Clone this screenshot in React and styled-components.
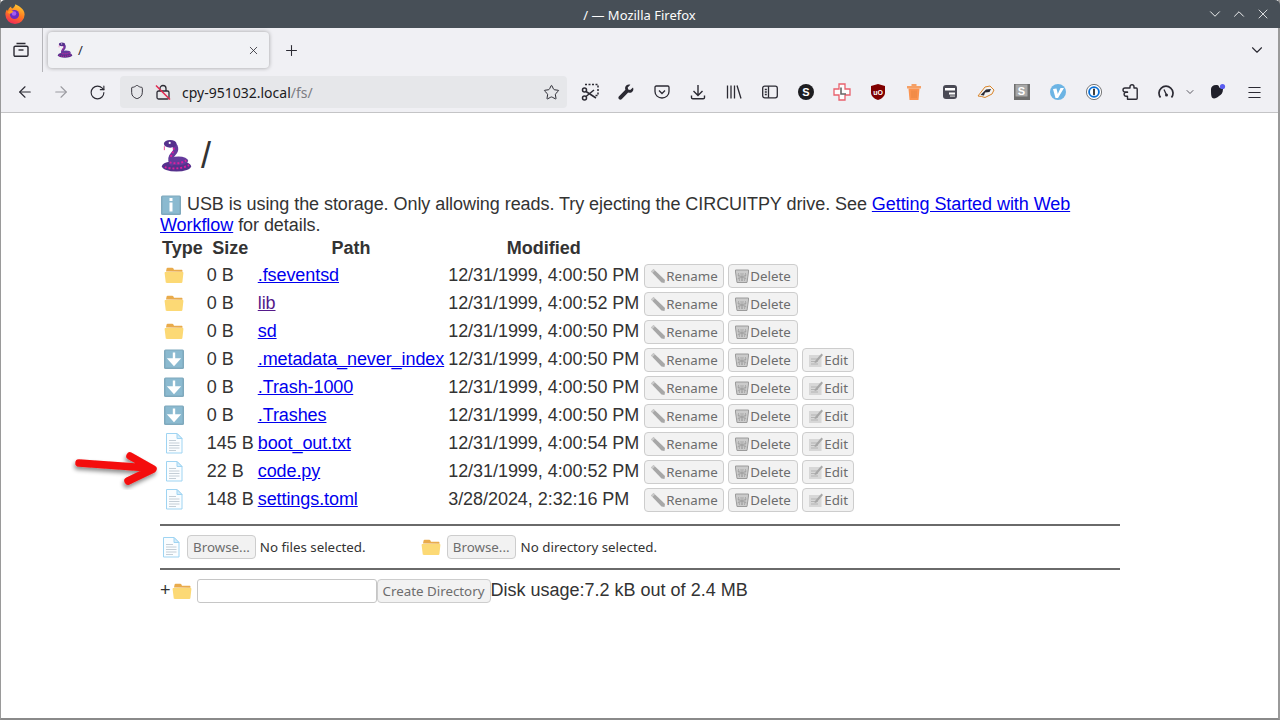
import React from 'react';
import styled, { createGlobalStyle } from 'styled-components';
import { ArrowLeft, ArrowRight, RotateCw, Shield, Star, Plus, X, ChevronDown, ChevronUp, Menu } from 'lucide-react';

const GlobalStyle = createGlobalStyle`
  html, body { margin: 0; padding: 0; background: #fff; overflow: hidden; }
  #root { width: 1280px; height: 720px; }
  * { box-sizing: border-box; }
`;

const Frame = styled.div`
  width: 1280px;
  height: 720px;
  display: flex;
  flex-direction: column;
  border-right: 2px solid #9a9a9a;
  border-bottom: 2px solid #8a8a8a;
  border-left: 1px solid #9a9a9a;
  background: #fff;
  position: relative;
`;

const TitleBar = styled.div`
  height: 28px;
  margin-left: -1px;
  margin-right: -2px;
  padding: 0 8px 0 4px;
  flex: none;
  display: flex;
  align-items: center;
  justify-content: space-between;
  background: #474f57;
  border-radius: 5px 5px 0 0;
`;

const TitleText = styled.div`
  font: 13px "Noto Sans", sans-serif;
  color: #fcfcfc;
  position: absolute;
  left: 0;
  right: 0;
  top: 6px;
  text-align: center;
`;

const WindowControls = styled.div`
  display: flex;
  gap: 6px;
  color: #fff;
`;

const WindowButton = styled.span`
  width: 18px;
  height: 18px;
  display: flex;
  align-items: center;
  justify-content: center;
`;

const TabStrip = styled.div`
  height: 44px;
  flex: none;
  display: flex;
  align-items: center;
  background: #f0f0f4;
  color: #2b2a33;
`;

const TabSlot = styled.div`
  width: 42px;
  height: 44px;
  flex: none;
  display: flex;
  align-items: center;
  justify-content: center;
  padding-right: 2px;
  border-right: 1px solid #b5b5b9;
  margin-right: 5px;
`;

const Tab = styled.div`
  width: 221px;
  height: 36px;
  flex: none;
  display: flex;
  align-items: center;
  padding: 0 9px;
  background: #f1f2f5;
  border-radius: 4px;
  box-shadow: 0 0 4px rgba(0, 0, 0, 0.35);
  font: 13px "Noto Sans", sans-serif;
`;

const TabTitle = styled.span`
  flex: 1;
  margin-left: 5px;
`;

const NewTab = styled.div`
  width: 44px;
  display: flex;
  justify-content: center;
`;

const TabListButton = styled.div`
  margin-left: auto;
  margin-right: 12px;
  display: flex;
`;

const NavBar = styled.div`
  height: 41px;
  flex: none;
  display: flex;
  align-items: center;
  padding-left: 6px;
  background: #f0f0f4;
  border-bottom: 1px solid #c4c4c6;
  color: #2b2a33;
`;

const ToolButton = styled.div`
  width: ${p => p.$width || 36}px;
  height: 32px;
  flex: none;
  display: flex;
  align-items: center;
  justify-content: center;
  color: ${p => p.$dim ? '#9a9aa0' : 'inherit'};
`;

const UrlBar = styled.div`
  width: 447px;
  height: 32px;
  margin: 0 5px;
  padding: 0 7px 0 9px;
  flex: none;
  display: flex;
  align-items: center;
  gap: 10px;
  border-radius: 4px;
  background: #e6e7ea;
`;

const UrlText = styled.span`
  flex: 1;
  margin-left: 1px;
  font: 14px "Noto Sans", sans-serif;
  color: #1c1b22;
`;

const UrlPath = styled.span`
  color: #7c7c82;
`;

const Content = styled.main`
  width: 960px;
  margin-left: 159px;
  flex: 1;
  font: 18px/21px "Liberation Sans", Arial, sans-serif;
  color: #333;
`;

const Heading = styled.h1`
  height: 41px;
  margin: 22px 0 18px;
  display: flex;
  align-items: center;
  gap: 8px;
  font: 36px/41px "Liberation Sans", Arial, sans-serif;
  color: #333;
`;

const Notice = styled.p`
  margin: 0;
  letter-spacing: -0.06px;
`;

const Link = styled.a`
  color: ${p => p.$visited ? '#551a8b' : '#0000ee'};
  text-decoration: underline;
`;

const FileTable = styled.table`
  margin: -1px 0 0 -1px;
  border-spacing: 2px;
  white-space: nowrap;
`;

const HeadCell = styled.th`
  padding: 1px;
  font-weight: bold;
  text-align: center;
`;

const Cell = styled.td`
  padding: 1px;
  height: 26px;
`;

const TypeCell = styled(Cell)`
  padding: 0 1px 2px 2px;
`;

const NameCell = styled(Cell)`
  letter-spacing: -0.08px;
`;

const DateCell = styled(Cell)`
  letter-spacing: -0.05px;
`;

const ActionCell = styled(Cell)`
  padding: 2px 1px 0 2px;
  font-size: 0;
`;

const EmojiBox = styled.span`
  display: inline-flex;
  vertical-align: middle;
  flex: none;
  width: 22px;
  height: 22px;
  margin: -2px 0;
`;

const DisabledButton = styled.button`
  height: 24px;
  padding: 0 5px;
  margin-right: 4px;
  display: inline-flex;
  align-items: center;
  vertical-align: middle;
  border: 1px solid #cdcdcd;
  border-radius: 4px;
  background: #f2f2f2;
  font: 13.33px "Noto Sans", sans-serif;
  color: #6d6d6d;
  white-space: nowrap;
`;

const ActionButton = styled(DisabledButton)`
  width: ${p => p.$width}px;
`;

const CreateButton = styled(DisabledButton)`
  width: 114px;
  margin-right: 0;
  justify-content: center;
`;

const Glyph = styled.span`
  display: inline-flex;
  flex: none;
  opacity: 0.7;
  filter: grayscale(1);
`;

const Rule = styled.hr`
  height: 2px;
  margin: ${p => p.$top || 0}px 0 0;
  border: 0;
  background: #6a6a6a;
`;

const UploadRow = styled.div`
  height: 42px;
  display: flex;
  align-items: center;
  font: 13.33px "Noto Sans", sans-serif;
  color: #333;
`;

const UploadIcon = styled.span`
  display: inline-flex;
  margin-right: 5px;
`;

const NoSelection = styled.span`
  margin-left: ${p => p.$left || 0}px;
  width: ${p => p.$width}px;
`;

const CreateRow = styled.div`
  height: 42px;
  display: flex;
  align-items: center;
`;

const RowText = styled.span`
  margin-bottom: 2px;
`;

const NameInput = styled.input`
  width: 180px;
  height: 24px;
  margin-left: 4px;
  border: 1px solid #c6c6c6;
  border-radius: 3px;
  background: #fff;
`;

const BadgeText = styled.text`
  font: bold ${p => p.$size}px "Liberation Sans", Arial, sans-serif;
  fill: ${p => p.$fill};
`;

const ArrowOverlay = styled.svg`
  position: absolute;
  left: 70px;
  top: 448px;
  width: 95px;
  height: 42px;
  pointer-events: none;
`;

const FirefoxLogo = () => (
  <svg width="22" height="22" viewBox="0 0 22 22">
    <defs>
      <linearGradient id="fx" x1="0.7" y1="0" x2="0.3" y2="1">
        <stop offset="0" stopColor="#ffcc33" />
        <stop offset="0.5" stopColor="#ff7a1f" />
        <stop offset="1" stopColor="#f0245c" />
      </linearGradient>
    </defs>
    <path d="M11 21a9.6 9.6 0 0 1-9.6-9.6c0-2 .6-3.6 1.6-5 .2.8.6 1.2 1 1.4.2-2.2 1.6-3.6 3.2-4.4-.2 1 .2 1.6 1.2 2 1.4-1 2.6-2 3-4.2 3.4 1.6 9.2 4.8 9.2 10.2A9.6 9.6 0 0 1 11 21z" fill="url(#fx)" />
    <circle cx="10.5" cy="11.5" r="4.6" fill="#6a2bc4" />
    <circle cx="10" cy="10.5" r="2.3" fill="#a65bf0" />
    <path d="M3.5 9c1.5 3 4 1.5 6-.5-2-1-3.500-1-6 .5z" fill="#ff9c24" />
  </svg>
);

const Blinka = ({ size = 32 }) => (
  <svg width={size} height={size} viewBox="0 0 32 34">
    <ellipse cx="16" cy="28" rx="15" ry="5.500" fill="#55308c" />
    <ellipse cx="18" cy="22.500" rx="10" ry="4.500" fill="#643a9c" />
    <path d="M10 5C17 6 16 12 13 15C10 18 9 21 11 25" fill="none" stroke="#643a9c" strokeWidth="5" strokeLinecap="round" />
    <ellipse cx="9.500" cy="5" rx="6.500" ry="4" fill="#55308c" />
    <path d="M13 9C14 12 11 15 10 19M4 29C10 31 21 31 29 27M9 24C14 26 22 25 26 22" fill="none" stroke="#dc1f9c" strokeWidth="2" strokeDasharray="2 2" />
    <circle cx="9" cy="4" r="1.100" fill="#fff" />
    <path d="M3.500 7.500v4" stroke="#e94a9a" strokeWidth="1" />
  </svg>
);

const FolderIcon = () => (
  <EmojiBox>
    <svg viewBox="0 0 22 22" width="100%" height="100%">
      <path d="M3 7.500l.6-3c.1-.5.5-.8 1-.8h4.700c.5 0 .8.2 1 .6l.7 1.500h7.500c.7 0 1 .5 1 1v1z" fill="#e9ab4b" />
      <path d="M2.500 8h17c.6 0 1 .5 .9 1.100l-1 9c-.1.6-.5.9-1 .9H3.700c-.5 0-1-.3-1-.9l-1.100-9C1.500 8.500 2 8 2.500 8z" fill="#fcd975" />
    </svg>
  </EmojiBox>
);

const FileIcon = () => (
  <EmojiBox>
    <svg viewBox="0 0 22 22" width="100%" height="100%">
      <path d="M3.500 1.500h10.500l5 5v14.500H3.500z" fill="#fafdff" stroke="#9fd4f2" strokeWidth="1" />
      <path d="M14 1.500v5h5z" fill="#d5ecfa" stroke="#9fd4f2" strokeWidth="1" />
      <path d="M6 8.500h7M6 11h10.500M6 13.500h10.500M6 16h10.500M6 18.500h7" stroke="#c4ced6" strokeWidth="1" />
    </svg>
  </EmojiBox>
);

const DownIcon = () => (
  <EmojiBox>
    <svg viewBox="0 0 22 22" width="100%" height="100%">
      <rect x="1" y="1.500" width="20" height="19.500" rx="1.500" fill="#7fa9bd" />
      <rect x="2.500" y="2.500" width="17" height="17" fill="#8bbad0" />
      <path d="M11 4.500v11M6.500 11.500l4.500 5 4.500-5z" stroke="#fff" strokeWidth="2.400" fill="#fff" />
    </svg>
  </EmojiBox>
);

const InfoIcon = () => (
  <EmojiBox>
    <svg viewBox="0 0 22 22" width="100%" height="100%">
      <rect x="1" y="1.500" width="20" height="19.500" rx="1.500" fill="#7fa9bd" />
      <rect x="2.500" y="2.500" width="17" height="17" fill="#8bbad0" />
      <rect x="9.500" y="4" width="3" height="3" fill="#fff" />
      <rect x="9.500" y="8.500" width="3" height="9" fill="#fff" />
    </svg>
  </EmojiBox>
);

const PencilGlyph = () => (
  <Glyph>
    <svg width="16" height="16" viewBox="0 0 16 16">
      <path d="M1 3.500L3.500 1l11.500 11-.5 3-3-.5z" fill="#888" />
      <path d="M1 3.500L3.500 1l1.500 1.500L2.500 5z" fill="#bbb" />
    </svg>
  </Glyph>
);

const TrashGlyph = () => (
  <Glyph>
    <svg width="16" height="16" viewBox="0 0 16 16">
      <path d="M1.500 2h13v2L13 14.500H3L1.500 4z" fill="#bbb" stroke="#777" strokeWidth="1" />
      <path d="M4.500 5l1 8M7 5l.5 8M9 5l-.5 8M11.500 5l-1 8M3.500 7l9 4M12.500 7l-9 4" stroke="#777" strokeWidth="0.700" />
    </svg>
  </Glyph>
);

const MemoGlyph = () => (
  <Glyph>
    <svg width="16" height="16" viewBox="0 0 16 16">
      <rect x="1" y="3" width="12.500" height="12" fill="#ccc" />
      <path d="M3 7h7M3 9.500h7M3 12h7" stroke="#999" strokeWidth="1" />
      <path d="M7 9l6.500-7.500 1.500 1.500-6.500 7.500-2 .5z" fill="#888" />
    </svg>
  </Glyph>
);

const ViewIcon = () => (
  <svg width="16" height="16" viewBox="0 0 16 16" fill="none" stroke="currentColor" strokeWidth="1.400">
    <path d="M3.500 1.500h9M1 5.500c0-.8.5-1.300 1.300-1.300h11.400c.8 0 1.300.5 1.300 1.300v7.500c0 .8-.5 1.300-1.300 1.300H2.300C1.500 14.300 1 13.800 1 13z" />
    <path d="M5.500 8h5" />
  </svg>
);

const LockOff = () => (
  <svg width="16" height="16" viewBox="0 0 16 16" fill="none" stroke="#2b2a33" strokeWidth="1.300">
    <rect x="2" y="7" width="12" height="8" rx="1.500" />
    <path d="M5 7V4.500a3 3 0 0 1 6 0V7" />
    <path d="M1 1.500l14 14" stroke="#e22850" strokeWidth="1.500" />
  </svg>
);

const ScreenshotIcon = () => (
  <svg width="18" height="18" viewBox="0 0 18 18" fill="none" stroke="#2b2a33" strokeWidth="1.500">
    <path d="M4 1.500h13v11h-3" strokeDasharray="2 1.500" />
    <circle cx="3.500" cy="7" r="2" />
    <circle cx="3.500" cy="15" r="2" />
    <path d="M5 8.500l10 6.500M5 13.500l8-6.500" />
  </svg>
);

const WrenchIcon = () => (
  <svg width="16" height="16" viewBox="0 0 16 16" fill="#2b2a33">
    <path d="M15 3.500l-2.800 2.500-2-.5-.5-2L12.400.8C10.500 0 8.300.8 7.500 2.500c-.5 1-.5 2.200-.1 3.200L.8 12.500c-.8.800-.3 2.200.3 2.700.6.500 1.800.7 2.500 0l6.600-6.700c1 .4 2.200.4 3.200-.1 1.800-.9 2.500-3 1.600-4.900z" />
  </svg>
);

const PocketIcon = () => (
  <svg width="16" height="16" viewBox="0 0 16 16" fill="none" stroke="#2b2a33" strokeWidth="1.300">
    <path d="M2.200 2h11.600c.7 0 1.200.5 1.200 1.200v4.300c0 3.700-3.100 6.500-7 6.500s-7-2.800-7-6.500V3.200C1 2.500 1.500 2 2.200 2z" />
    <path d="M5 6.500l3 3 3-3" />
  </svg>
);

const DownloadIcon = () => (
  <svg width="16" height="16" viewBox="0 0 16 16" fill="none" stroke="#2b2a33" strokeWidth="1.400">
    <path d="M8 1v10M3.500 7L8 11.500 12.500 7M1.500 11.500v2c0 .8.500 1.300 1.300 1.300h10.400c.8 0 1.300-.5 1.300-1.300v-2" />
  </svg>
);

const LibraryIcon = () => (
  <svg width="16" height="16" viewBox="0 0 16 16" fill="none" stroke="#2b2a33" strokeWidth="1.300">
    <path d="M1.500 1.500v13M5 1.500v13M8.500 1.500v13M11 1.500l4 13" />
  </svg>
);

const SidebarIcon = () => (
  <svg width="16" height="16" viewBox="0 0 16 16" fill="none" stroke="#2b2a33" strokeWidth="1.300">
    <rect x="0.700" y="2.200" width="14.600" height="11.600" rx="2" />
    <path d="M6.500 2.200v11.600M2.800 5.500h2M2.800 8h2M2.800 10.500h2" />
  </svg>
);

const SBadge = () => (
  <svg width="16" height="16" viewBox="0 0 16 16">
    <circle cx="8" cy="8" r="8" fill="#1d1d20" />
    <BadgeText x="8" y="12" textAnchor="middle" $size={11} $fill="#fff">S</BadgeText>
  </svg>
);

const CrossExt = () => (
  <svg width="18" height="18" viewBox="0 0 18 18">
    <path d="M6 1h6v5h5v6h-5v5H6v-5H1V6h5z" fill="#fdfdfd" stroke="#e8606c" strokeWidth="1.300" />
    <path d="M8 4.500v6.500h5" fill="none" stroke="#666" strokeWidth="1.600" />
  </svg>
);

const UBlock = () => (
  <svg width="16" height="16" viewBox="0 0 16 16">
    <path d="M8 0l7 2v7c0 3-3.500 6-7 7-3.500-1-7-4-7-7V2z" fill="#800000" />
    <BadgeText x="8" y="10.500" textAnchor="middle" $size={7} $fill="#fff">uO</BadgeText>
  </svg>
);

const TrashExt = () => (
  <svg width="16" height="18" viewBox="0 0 16 18">
    <path d="M1 3h14v2.500H1zM5.500 1h5v2h-5z" fill="#f5a066" />
    <path d="M2.500 5.500h11L12.500 17h-9z" fill="#fb9350" />
    <path d="M6 7.500v7.500M8 7.500v7.500M10 7.500v7.500" stroke="#e5803e" strokeWidth="0.800" />
  </svg>
);

const ServerExt = () => (
  <svg width="16" height="16" viewBox="0 0 16 16">
    <rect x="1" y="1" width="14" height="14" rx="3" fill="#4a4a55" />
    <rect x="3" y="4" width="10" height="2.500" fill="#fff" />
    <rect x="7" y="8.500" width="6" height="2" fill="#fff" />
    <rect x="8" y="11.500" width="5" height="1.200" fill="#ccc" />
  </svg>
);

const BirdExt = () => (
  <svg width="18" height="18" viewBox="0 0 18 18">
    <path d="M1 13L8 4l5-1 4 4-2 4-7 3.500-3.500-1z" fill="#f3f3f3" stroke="#d98428" strokeWidth="1" />
    <path d="M3.500 12L9 6.500l5-.5-1.500 3L8 9.500l-1 3z" fill="#2b2a33" />
  </svg>
);

const KeyExt = () => (
  <svg width="16" height="16" viewBox="0 0 16 16">
    <rect x="0" y="0" width="16" height="16" fill="#6e6e6e" />
    <rect x="1.500" y="0.500" width="12" height="12" fill="#a8a8a8" />
    <BadgeText x="7.500" y="10.500" textAnchor="middle" $size={11} $fill="#fff">S</BadgeText>
  </svg>
);

const VExt = () => (
  <svg width="16" height="16" viewBox="0 0 16 16">
    <circle cx="8" cy="8" r="8" fill="#6cb4e4" />
    <path d="M3 5l3.500-.5 1.300 5.500L10.500 4H14L8 14H5.500z" fill="#fff" />
  </svg>
);

const OnePassword = () => (
  <svg width="16" height="16" viewBox="0 0 16 16">
    <circle cx="8" cy="8" r="7.600" fill="#fff" stroke="#555" strokeWidth="0.800" />
    <circle cx="8" cy="8" r="5.800" fill="#0a6fd6" />
    <circle cx="8" cy="8" r="4" fill="#fff" />
    <rect x="7.200" y="4.600" width="1.600" height="6.800" rx="0.800" fill="#111" />
  </svg>
);

const PuzzleIcon = () => (
  <svg width="16" height="16" viewBox="0 0 16 16" fill="none" stroke="#2b2a33" strokeWidth="1.400" strokeLinejoin="round">
    <path d="M5.500 4H8V2.700a2 2 0 0 1 4 0V4h2.300c.5 0 .9.400.9.900v9.400c0 .5-.4.900-.9.900H5.500v-3H4a1.900 1.900 0 0 1 0-3.800h1.500V8H3a2 2 0 0 1 0-4z" />
  </svg>
);

const GaugeIcon = () => (
  <svg width="16" height="16" viewBox="0 0 16 16" fill="none" stroke="#2b2a33" strokeWidth="1.700">
    <path d="M2.500 13.500A7 7 0 1 1 13.500 13.500" />
    <path d="M6 5.500l2.300 5" strokeWidth="1.300" />
    <circle cx="8.500" cy="11" r="1.500" fill="#2b2a33" stroke="none" />
  </svg>
);

const AccountIcon = () => (
  <svg width="18" height="18" viewBox="0 0 18 18">
    <path d="M2 6c0-2 2-4 5-4 2 0 3 .5 3 2 0 1 2 1 4 2 0 4-2 6-4 7-2 2-5 3-6.500 2C2 14 2 10 2 6z" fill="#20202a" />
    <circle cx="13.500" cy="3.500" r="2.600" fill="#5a5df0" />
  </svg>
);

const ActionButtons = ({ editable }) => (
  <>
    <ActionButton disabled $width={80}><PencilGlyph />Rename</ActionButton>
    <ActionButton disabled $width={70}><TrashGlyph />Delete</ActionButton>
    {editable && <ActionButton disabled $width={52}><MemoGlyph />Edit</ActionButton>}
  </>
);

const rows = [
  { icon: 'folder', size: '0 B', name: '.fseventsd', modified: '12/31/1999, 4:00:50 PM' },
  { icon: 'folder', size: '0 B', name: 'lib', modified: '12/31/1999, 4:00:52 PM', visited: true },
  { icon: 'folder', size: '0 B', name: 'sd', modified: '12/31/1999, 4:00:50 PM' },
  { icon: 'down', size: '0 B', name: '.metadata_never_index', modified: '12/31/1999, 4:00:50 PM', editable: true },
  { icon: 'down', size: '0 B', name: '.Trash-1000', modified: '12/31/1999, 4:00:50 PM', editable: true },
  { icon: 'down', size: '0 B', name: '.Trashes', modified: '12/31/1999, 4:00:50 PM', editable: true },
  { icon: 'file', size: '145 B', name: 'boot_out.txt', modified: '12/31/1999, 4:00:54 PM', editable: true },
  { icon: 'file', size: '22 B', name: 'code.py', modified: '12/31/1999, 4:00:52 PM', editable: true },
  { icon: 'file', size: '148 B', name: 'settings.toml', modified: '3/28/2024, 2:32:16 PM', editable: true },
];

const rowIcons = { folder: FolderIcon, down: DownIcon, file: FileIcon };

const App = () => (
  <Frame>
    <GlobalStyle />
    <TitleBar>
      <FirefoxLogo />
      <TitleText>/ — Mozilla Firefox</TitleText>
      <WindowControls>
        <WindowButton><ChevronDown size={18} strokeWidth={1.2} /></WindowButton>
        <WindowButton><ChevronUp size={18} strokeWidth={1.2} /></WindowButton>
        <WindowButton><X size={16} strokeWidth={1.2} /></WindowButton>
      </WindowControls>
    </TitleBar>
    <TabStrip>
      <TabSlot><ViewIcon /></TabSlot>
      <Tab>
        <Blinka size={16} />
        <TabTitle>/</TabTitle>
        <X size={13} strokeWidth={1.5} />
      </Tab>
      <NewTab><Plus size={17} strokeWidth={1.5} /></NewTab>
      <TabListButton><ChevronDown size={18} strokeWidth={1.5} /></TabListButton>
    </TabStrip>
    <NavBar>
      <ToolButton><ArrowLeft size={18} strokeWidth={1.5} /></ToolButton>
      <ToolButton $dim><ArrowRight size={18} strokeWidth={1.5} /></ToolButton>
      <ToolButton><RotateCw size={17} strokeWidth={1.6} /></ToolButton>
      <UrlBar>
        <Shield size={16} strokeWidth={1.4} />
        <LockOff />
        <UrlText>cpy-951032.local<UrlPath>/fs/</UrlPath></UrlText>
        <Star size={17} strokeWidth={1.4} />
      </UrlBar>
      <ToolButton><ScreenshotIcon /></ToolButton>
      <ToolButton><WrenchIcon /></ToolButton>
      <ToolButton><PocketIcon /></ToolButton>
      <ToolButton><DownloadIcon /></ToolButton>
      <ToolButton><LibraryIcon /></ToolButton>
      <ToolButton><SidebarIcon /></ToolButton>
      <ToolButton><SBadge /></ToolButton>
      <ToolButton><CrossExt /></ToolButton>
      <ToolButton><UBlock /></ToolButton>
      <ToolButton><TrashExt /></ToolButton>
      <ToolButton><ServerExt /></ToolButton>
      <ToolButton><BirdExt /></ToolButton>
      <ToolButton><KeyExt /></ToolButton>
      <ToolButton><VExt /></ToolButton>
      <ToolButton><OnePassword /></ToolButton>
      <ToolButton><PuzzleIcon /></ToolButton>
      <ToolButton><GaugeIcon /></ToolButton>
      <ToolButton $width={12}><ChevronDown size={12} strokeWidth={1.5} /></ToolButton>
      <ToolButton $width={4} />
      <ToolButton><AccountIcon /></ToolButton>
      <ToolButton><Menu size={17} strokeWidth={1.5} /></ToolButton>
    </NavBar>
    <Content>
      <Heading><Blinka size={33} /> /</Heading>
      <Notice>
        <InfoIcon /> USB is using the storage. Only allowing reads. Try ejecting the CIRCUITPY drive. See{' '}
        <Link href="#">Getting Started with Web Workflow</Link> for details.
      </Notice>
      <FileTable>
        <thead>
          <tr>
            <HeadCell>Type</HeadCell>
            <HeadCell>Size</HeadCell>
            <HeadCell>Path</HeadCell>
            <HeadCell>Modified</HeadCell>
            <HeadCell />
          </tr>
        </thead>
        <tbody>
          {rows.map(row => {
            const Icon = rowIcons[row.icon];
            return (
              <tr key={row.name}>
                <TypeCell><Icon /></TypeCell>
                <Cell>{row.size}</Cell>
                <NameCell><Link href="#" $visited={row.visited}>{row.name}</Link></NameCell>
                <DateCell>{row.modified}</DateCell>
                <ActionCell><ActionButtons editable={row.editable} /></ActionCell>
              </tr>
            );
          })}
        </tbody>
      </FileTable>
      <Rule $top={10} />
      <UploadRow>
        <UploadIcon><FileIcon /></UploadIcon>
        <DisabledButton disabled>Browse...</DisabledButton>
        <NoSelection $width={160}>No files selected.</NoSelection>
        <UploadIcon><FolderIcon /></UploadIcon>
        <DisabledButton disabled>Browse...</DisabledButton>
        <NoSelection $left={1}>No directory selected.</NoSelection>
      </UploadRow>
      <Rule />
      <CreateRow>
        <RowText>+</RowText>
        <FolderIcon />
        <NameInput disabled />
        <CreateButton disabled>Create Directory</CreateButton>
        <RowText>Disk usage:7.2 kB out of 2.4 MB</RowText>
      </CreateRow>
    </Content>
    <ArrowOverlay viewBox="0 0 95 42">
      <defs>
        <filter id="arrowShadow" x="-20%" y="-30%" width="140%" height="170%">
          <feDropShadow dx="-1" dy="3" stdDeviation="2" floodColor="#000" floodOpacity="0.45" />
        </filter>
      </defs>
      <path d="M8 15L78 20M59 8L82 21L57 33" fill="none" stroke="#f40b0b" strokeWidth="7.500" strokeLinecap="round" strokeLinejoin="round" filter="url(#arrowShadow)" />
    </ArrowOverlay>
  </Frame>
);

export default App;
